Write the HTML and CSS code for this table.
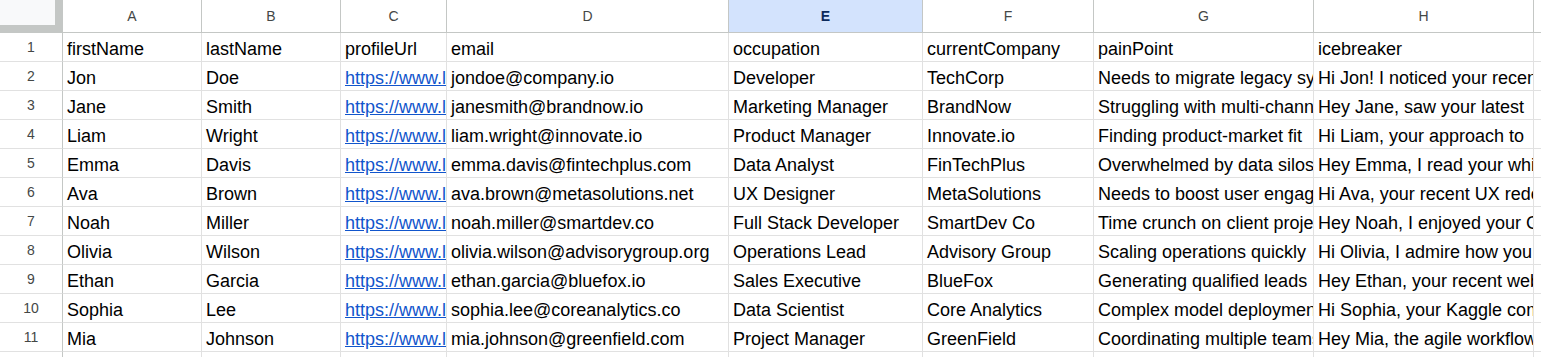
FILE: index.html
```html
<!DOCTYPE html>
<html>
<head>
<meta charset="utf-8">
<link rel="stylesheet" href="styles.css">
</head>
<body>
<div class="sheet">
  <div class="corner"></div>
  <div class="colhead">A</div>
  <div class="colhead">B</div>
  <div class="colhead">C</div>
  <div class="colhead">D</div>
  <div class="colhead selected">E</div>
  <div class="colhead">F</div>
  <div class="colhead">G</div>
  <div class="colhead">H</div>
  <div class="colhead last"></div>

  <div class="rowhead">1</div>
  <div class="cell">firstName</div><div class="cell">lastName</div><div class="cell">profileUrl</div><div class="cell">email</div><div class="cell">occupation</div><div class="cell">currentCompany</div><div class="cell">painPoint</div><div class="cell">icebreaker</div><div class="cell"></div>

  <div class="rowhead">2</div>
  <div class="cell">Jon</div><div class="cell">Doe</div><div class="cell"><span class="link">https://www.linkedin.com/in/jondoe</span></div><div class="cell">jondoe@company.io</div><div class="cell">Developer</div><div class="cell">TechCorp</div><div class="cell">Needs to migrate legacy systems to the cloud</div><div class="cell">Hi Jon! I noticed your recent post on microservices</div><div class="cell"></div>

  <div class="rowhead">3</div>
  <div class="cell">Jane</div><div class="cell">Smith</div><div class="cell"><span class="link">https://www.linkedin.com/in/janesmith</span></div><div class="cell">janesmith@brandnow.io</div><div class="cell">Marketing Manager</div><div class="cell">BrandNow</div><div class="cell">Struggling with multi-channel attribution</div><div class="cell">Hey Jane, saw your latest<br>campaign launch and loved it</div><div class="cell"></div>

  <div class="rowhead">4</div>
  <div class="cell">Liam</div><div class="cell">Wright</div><div class="cell"><span class="link">https://www.linkedin.com/in/liamwright</span></div><div class="cell">liam.wright@innovate.io</div><div class="cell">Product Manager</div><div class="cell">Innovate.io</div><div class="cell">Finding product-market fit<br>for new features</div><div class="cell">Hi Liam, your approach to<br>roadmapping is great</div><div class="cell"></div>

  <div class="rowhead">5</div>
  <div class="cell">Emma</div><div class="cell">Davis</div><div class="cell"><span class="link">https://www.linkedin.com/in/emmadavis</span></div><div class="cell">emma.davis@fintechplus.com</div><div class="cell">Data Analyst</div><div class="cell">FinTechPlus</div><div class="cell">Overwhelmed by data silos</div><div class="cell">Hey Emma, I read your whitepaper on analytics</div><div class="cell"></div>

  <div class="rowhead">6</div>
  <div class="cell">Ava</div><div class="cell">Brown</div><div class="cell"><span class="link">https://www.linkedin.com/in/avabrown</span></div><div class="cell">ava.brown@metasolutions.net</div><div class="cell">UX Designer</div><div class="cell">MetaSolutions</div><div class="cell">Needs to boost user engagement</div><div class="cell">Hi Ava, your recent UX redesign looks amazing</div><div class="cell"></div>

  <div class="rowhead">7</div>
  <div class="cell">Noah</div><div class="cell">Miller</div><div class="cell"><span class="link">https://www.linkedin.com/in/noahmiller</span></div><div class="cell">noah.miller@smartdev.co</div><div class="cell">Full Stack Developer</div><div class="cell">SmartDev Co</div><div class="cell">Time crunch on client projects</div><div class="cell">Hey Noah, I enjoyed your GitHub project</div><div class="cell"></div>

  <div class="rowhead">8</div>
  <div class="cell">Olivia</div><div class="cell">Wilson</div><div class="cell"><span class="link">https://www.linkedin.com/in/oliviawilson</span></div><div class="cell">olivia.wilson@advisorygroup.org</div><div class="cell">Operations Lead</div><div class="cell">Advisory Group</div><div class="cell">Scaling operations quickly</div><div class="cell">Hi Olivia, I admire how you streamline processes</div><div class="cell"></div>

  <div class="rowhead">9</div>
  <div class="cell">Ethan</div><div class="cell">Garcia</div><div class="cell"><span class="link">https://www.linkedin.com/in/ethangarcia</span></div><div class="cell">ethan.garcia@bluefox.io</div><div class="cell">Sales Executive</div><div class="cell">BlueFox</div><div class="cell">Generating qualified leads</div><div class="cell">Hey Ethan, your recent webinar was insightful</div><div class="cell"></div>

  <div class="rowhead">10</div>
  <div class="cell">Sophia</div><div class="cell">Lee</div><div class="cell"><span class="link">https://www.linkedin.com/in/sophialee</span></div><div class="cell">sophia.lee@coreanalytics.co</div><div class="cell">Data Scientist</div><div class="cell">Core Analytics</div><div class="cell">Complex model deployment</div><div class="cell">Hi Sophia, your Kaggle competition results</div><div class="cell"></div>

  <div class="rowhead">11</div>
  <div class="cell">Mia</div><div class="cell">Johnson</div><div class="cell"><span class="link">https://www.linkedin.com/in/miajohnson</span></div><div class="cell">mia.johnson@greenfield.com</div><div class="cell">Project Manager</div><div class="cell">GreenField</div><div class="cell">Coordinating multiple teams</div><div class="cell">Hey Mia, the agile workflow you shared</div><div class="cell"></div>

  <div class="rowhead">12</div>
  <div class="cell"></div><div class="cell"></div><div class="cell"></div><div class="cell"></div><div class="cell"></div><div class="cell"></div><div class="cell"></div><div class="cell"></div><div class="cell"></div>
</div>
</body>
</html>
```

FILE: styles.css
```css
html, body {
  margin: 0;
  padding: 0;
  background: #ffffff;
  overflow: hidden;
}

.sheet {
  display: grid;
  grid-template-columns: 63px 139px 139px 106px 282px 194px 171px 220px 220px 1fr;
  grid-template-rows: 33px repeat(11, 29px) 6px;
  width: 1541px;
  height: 357px;
  overflow: hidden;
  font-family: "Liberation Sans", Arial, sans-serif;
}

.sheet > div {
  box-sizing: border-box;
  overflow: hidden;
  white-space: nowrap;
}

.corner {
  background: #f8f9fa;
  border-right: 8px solid #c4c7c5;
  border-bottom: 8px solid #c4c7c5;
}

.colhead {
  background: #ffffff;
  border-right: 1px solid #c4c7c5;
  border-bottom: 1px solid #c4c7c5;
  color: #444746;
  font-size: 14px;
  line-height: 32px;
  text-align: center;
}

.colhead.selected {
  background: #d3e3fd;
  color: #0b2a5c;
  font-weight: bold;
}

.colhead.last {
  border-right: none;
}

.rowhead {
  background: #ffffff;
  border-right: 1px solid #c4c7c5;
  border-bottom: 1px solid #e1e1e1;
  color: #444746;
  font-size: 14px;
  line-height: 28px;
  text-align: center;
}

.cell {
  border-right: 1px solid #e1e1e1;
  border-bottom: 1px solid #e1e1e1;
  color: #000000;
  font-size: 18px;
  line-height: 24px;
  padding: 4px 4px 0 4px;
}

.link {
  color: #1155cc;
  text-decoration: underline;
}
```
